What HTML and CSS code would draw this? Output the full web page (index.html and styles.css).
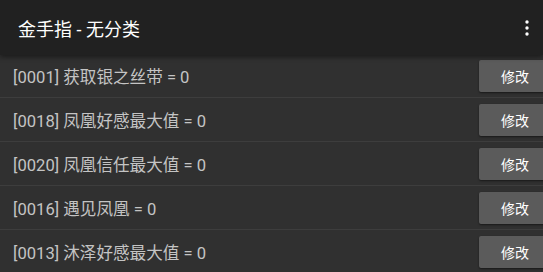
FILE: index.html
```html
<!DOCTYPE html>
<html lang="zh">
<head>
  <meta charset="UTF-8" />
  <title>金手指 - 无分类</title>
  <link rel="stylesheet" href="styles.css">
</head>
<body>

  <!-- Toolbar -->
  <div class="toolbar">
    <div class="title">金手指 - 无分类</div>
    <div class="menu">
      <svg width="4" height="16" viewBox="0 0 4 16">
        <circle cx="2" cy="2" r="1.7" fill="#fff"/>
        <circle cx="2" cy="8" r="1.7" fill="#fff"/>
        <circle cx="2" cy="14" r="1.7" fill="#fff"/>
      </svg>
    </div>
  </div>

  <!-- Cheat list -->
  <div class="list">
    <div class="row">
      <div class="label">[0001] 获取银之丝带 = 0</div>
      <button class="edit">修改</button>
    </div>
    <div class="row">
      <div class="label">[0018] 凤凰好感最大值 = 0</div>
      <button class="edit">修改</button>
    </div>
    <div class="row">
      <div class="label">[0020] 凤凰信任最大值 = 0</div>
      <button class="edit">修改</button>
    </div>
    <div class="row">
      <div class="label">[0016] 遇见凤凰 = 0</div>
      <button class="edit">修改</button>
    </div>
    <div class="row">
      <div class="label">[0013] 沐泽好感最大值 = 0</div>
      <button class="edit">修改</button>
    </div>
  </div>

</body>
</html>
```

FILE: styles.css
```css
* {
  box-sizing: border-box;
  margin: 0;
  padding: 0;
  font-family: Roboto, "Noto Sans CJK SC", sans-serif;
}

body {
  background: #303030;
  width: 543px;
  height: 272px;
  overflow: hidden;
}

.toolbar {
  height: 55px;
  background: #212121;
  display: flex;
  align-items: center;
  justify-content: space-between;
  padding: 0 14px 0 18px;
  position: relative;
  z-index: 2;
  box-shadow: 0 2px 5px rgba(0, 0, 0, 0.45);
}

.title {
  color: #ffffff;
  font-size: 18px;
  margin-top: 1px;
}

.menu {
  display: flex;
  align-items: center;
}

.row {
  height: 44px;
  display: flex;
  align-items: center;
  justify-content: space-between;
  padding-left: 13px;
  border-bottom: 1px solid #3d3d3d;
}

.row:first-child {
  height: 43px;
}

.label {
  color: #c4c4c4;
  font-size: 16.6px;
}

.edit {
  width: 72px;
  height: 32px;
  margin-right: -8px;
  background: #5b5b5b;
  color: #ffffff;
  border: none;
  border-radius: 2px;
  font-size: 14px;
  box-shadow: 0 1px 2px rgba(0, 0, 0, 0.5);
}
```
